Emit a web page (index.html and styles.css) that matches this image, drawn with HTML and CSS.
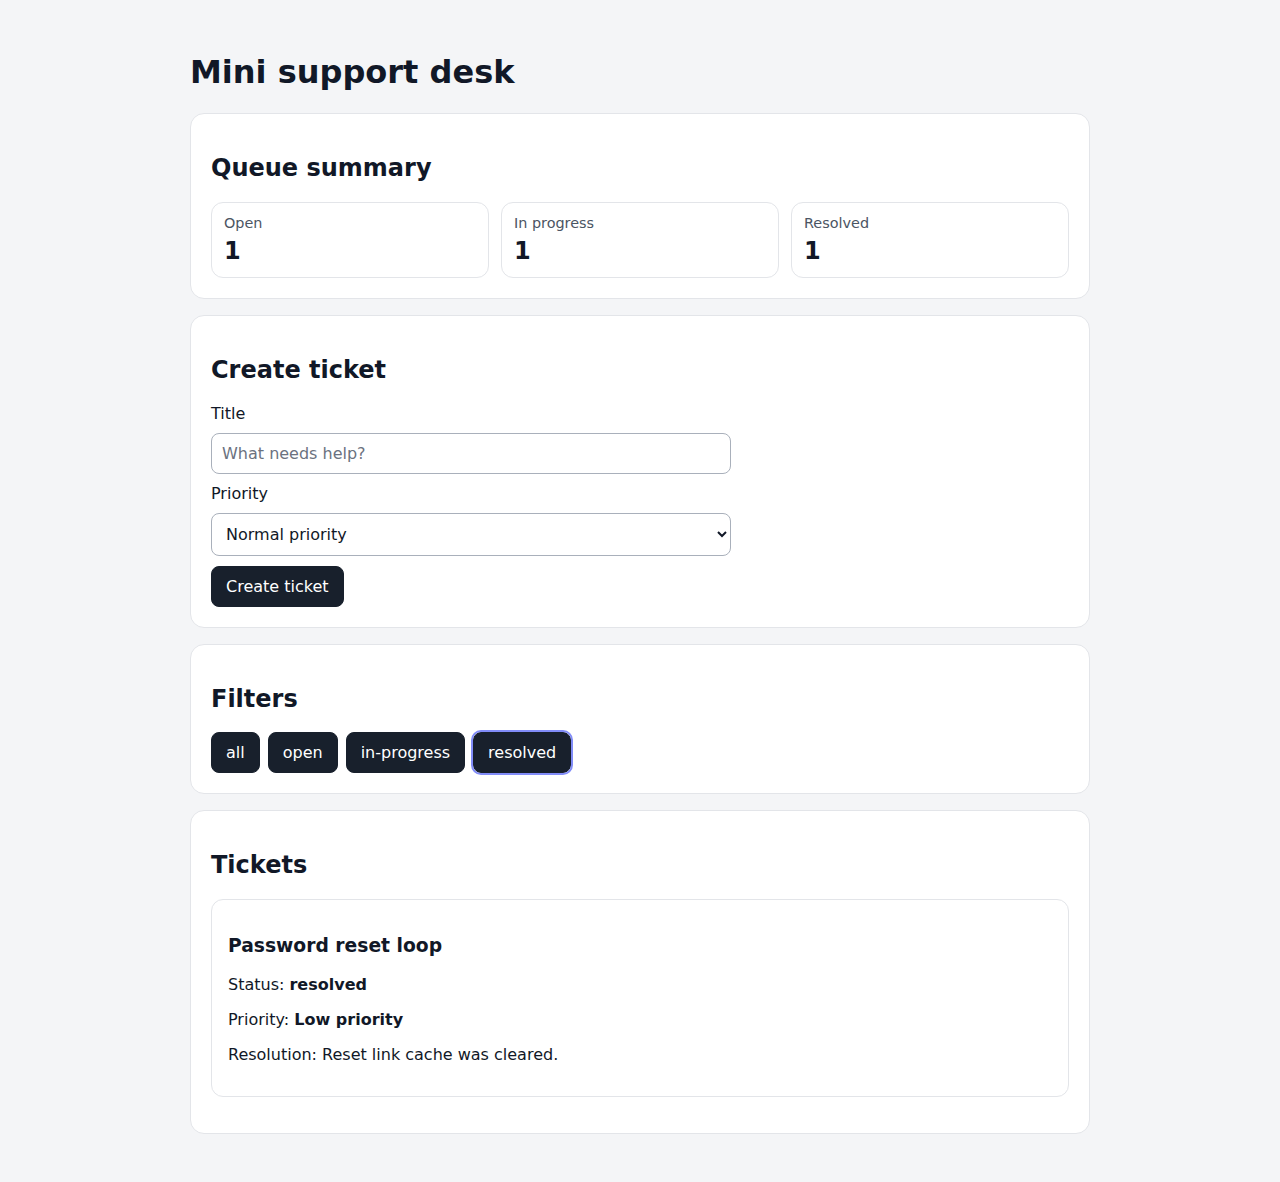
FILE: index.html
```html
<!DOCTYPE html>
<html lang="en">
<head>
<meta charset="utf-8">
<title>Mini support desk</title>
<link rel="stylesheet" href="styles.css">
</head>
<body>
<main class="page">
  <h1 class="page-title">Mini support desk</h1>

  <section class="card">
    <h2 class="card-title">Queue summary</h2>
    <div class="stats">
      <div class="stat"><div class="stat-label">Open</div><div class="stat-value">1</div></div>
      <div class="stat"><div class="stat-label">In progress</div><div class="stat-value">1</div></div>
      <div class="stat"><div class="stat-label">Resolved</div><div class="stat-value">1</div></div>
    </div>
  </section>

  <section class="card">
    <h2 class="card-title">Create ticket</h2>
    <form class="form">
      <label class="field-label" for="title">Title</label>
      <input class="field" id="title" type="text" placeholder="What needs help?">
      <label class="field-label" for="priority">Priority</label>
      <select class="field field-select" id="priority">
        <option>Normal priority</option>
        <option>Low priority</option>
        <option>High priority</option>
      </select>
      <button class="btn" type="button">Create ticket</button>
    </form>
  </section>

  <section class="card">
    <h2 class="card-title">Filters</h2>
    <div class="filters">
      <button class="btn" type="button">all</button>
      <button class="btn" type="button">open</button>
      <button class="btn" type="button">in-progress</button>
      <button class="btn btn-active" type="button">resolved</button>
    </div>
  </section>

  <section class="card">
    <h2 class="card-title">Tickets</h2>
    <ul class="tickets">
      <li class="ticket">
        <h3 class="ticket-title">Password reset loop</h3>
        <p class="ticket-line">Status: <strong>resolved</strong></p>
        <p class="ticket-line">Priority: <strong>Low priority</strong></p>
        <p class="ticket-line">Resolution: Reset link cache was cleared.</p>
      </li>
    </ul>
  </section>
</main>
</body>
</html>
```

FILE: styles.css
```css
* { box-sizing: border-box; }

html, body {
  margin: 0;
  background: #f4f5f7;
  color: #111827;
  font-family: "DejaVu Sans", "Noto Sans", sans-serif;
  font-size: 16px;
}

.page {
  max-width: 900px;
  margin: 0 auto;
  padding: 30px 0 32px;
}

.page-title {
  font-size: 32px;
  font-weight: bold;
  margin: 23px 0 22px;
  color: #111827;
}

.card {
  background: #ffffff;
  border: 1px solid #e3e5e9;
  border-radius: 14px;
  padding: 20px;
  margin-bottom: 16px;
}

.card-title {
  font-size: 24px;
  font-weight: bold;
  margin: 19.92px 0;
}

.stats {
  display: grid;
  grid-template-columns: repeat(3, 1fr);
  gap: 12px;
}

.stat {
  border: 1px solid #e3e5e9;
  border-radius: 12px;
  padding: 12px;
}

.stat-label {
  font-size: 14.4px;
  color: #4b5563;
}

.stat-value {
  font-size: 24px;
  font-weight: bold;
  margin-top: 6px;
}

.form {
  display: flex;
  flex-direction: column;
  gap: 10px;
  max-width: 520px;
}

.field-label {
  color: #111827;
}

.field {
  font: inherit;
  font-size: 16px;
  color: #111827;
  padding: 10px;
  border: 1px solid #a9b0bb;
  border-radius: 8px;
  background: #ffffff;
}

.field::placeholder {
  color: #6b7280;
}

.btn {
  font: inherit;
  font-size: 16px;
  color: #ffffff;
  background: #18202c;
  border: 1px solid #18202c;
  border-radius: 8px;
  padding: 10px 14px;
  align-self: flex-start;
  cursor: pointer;
}

.filters {
  display: flex;
  gap: 8px;
}

.btn-active {
  outline: 2px solid #818cf8;
  outline-offset: 0;
}

.tickets {
  list-style: none;
  margin: 16px 0;
  padding: 0;
}

.ticket {
  border: 1px solid #e3e5e9;
  border-radius: 12px;
  padding: 16px;
}

.ticket-title {
  font-size: 18.72px;
  font-weight: bold;
  margin: 18.72px 0;
}

.ticket-line {
  margin: 16px 0;
}
```
